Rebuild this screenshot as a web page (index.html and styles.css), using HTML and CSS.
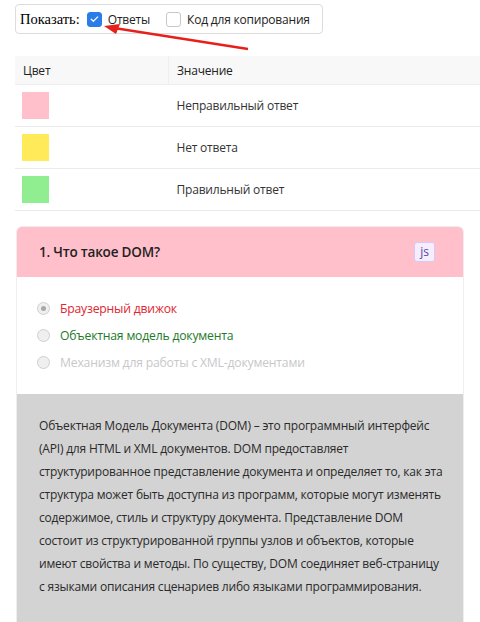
FILE: index.html
```html
<!DOCTYPE html>
<html lang="ru">
<head>
<meta charset="utf-8">
<link rel="stylesheet" href="styles.css">
</head>
<body>
<div class="page">
  <div class="toolbar">
    <span class="show-label">Показать:</span>
    <label class="opt"><span class="cb cb-on"><svg viewBox="0 0 16 16" width="14" height="14"><path d="M4 8.3l2.6 2.5L12 5.4" fill="none" stroke="#fff" stroke-width="1.5" stroke-linecap="round" stroke-linejoin="round"/></svg></span>Ответы</label>
    <label class="opt"><span class="cb"></span>Код для копирования</label>
  </div>
  <svg class="arrow" width="160" height="40" viewBox="0 0 160 40"><path d="M148 24 L14 3" stroke="#e8201c" stroke-width="2.5" fill="none"/><path d="M4 1 L20 -1 L16 9 Z" fill="#e8201c"/></svg>

  <table class="legend">
    <thead><tr><th class="c1">Цвет</th><th>Значение</th></tr></thead>
    <tbody>
      <tr><td class="c1"><span class="sw sw-pink"></span></td><td>Неправильный ответ</td></tr>
      <tr><td class="c1"><span class="sw sw-yellow"></span></td><td>Нет ответа</td></tr>
      <tr><td class="c1"><span class="sw sw-green"></span></td><td>Правильный ответ</td></tr>
    </tbody>
  </table>

  <div class="card">
    <div class="card-head">
      <span class="q-title">1. Что такое DOM?</span>
      <span class="tag">js</span>
    </div>
    <div class="card-body">
      <div class="ans wrong"><span class="radio radio-sel"></span>Браузерный движок</div>
      <div class="ans right"><span class="radio"></span>Объектная модель документа</div>
      <div class="ans dim"><span class="radio"></span>Механизм для работы с XML-документами</div>
    </div>
    <div class="explain">Объектная Модель Документа (DOM) – это программный интерфейс (API) для HTML и XML документов. DOM предоставляет структурированное представление документа и определяет то, как эта структура может быть доступна из программ, которые могут изменять содержимое, стиль и структуру документа. Представление DOM состоит из структурированной группы узлов и объектов, которые имеют свойства и методы. По существу, DOM соединяет веб-страницу с языками описания сценариев либо языками программирования.</div>
  </div>
</div>
</body>
</html>
```
FILE: styles.css
```css
html, body { margin: 0; padding: 0; background: #fff; }
body { font-family: "Open Sans", "Noto Sans", sans-serif; font-size: 12px; letter-spacing: -0.2px; color: #212529; }
.page { position: relative; padding: 4px 0 0 15px; }
.toolbar {
  display: inline-flex; align-items: center; height: 28px;
  border: 1px solid #dcdcdc; border-radius: 4px; padding: 0 12px 0 4px;
}
.show-label { font-family: "Liberation Serif", serif; font-size: 14.5px; letter-spacing: 0; color: #000; margin-right: 7px; }
.opt { display: inline-flex; align-items: center; color: #222; font-size: 12px; margin-right: 16px; }
.opt:last-child { margin-right: 0; }
.cb { width: 13px; height: 13px; border: 1px solid #c8c8c8; border-radius: 3px; margin-right: 6px; display: inline-flex; align-items: center; justify-content: center; background: #fff; }
.cb-on { background: #2a7de8; border-color: #2a7de8; }
.arrow { position: absolute; left: 100px; top: 25px; overflow: visible; }

.legend { border-collapse: collapse; width: 465px; margin-top: 22px; }
.legend th { background: #f8f8f8; text-align: left; font-weight: 400; height: 28px; padding: 0 8px; border-bottom: 1px solid #eee; color: #222; }
.legend th.c1 { border-right: 1px solid #eee; width: 137px; }
.legend td { height: 41px; padding: 0 8px; border-bottom: 1px solid #eaeaea; color: #333; }
.legend td.c1 { padding-left: 7px; }
.sw { display: block; width: 27px; height: 27px; }
.sw-pink { background: #ffc0cb; }
.sw-yellow { background: #ffeb5a; }
.sw-green { background: #90ee90; }

.card { box-sizing: border-box; width: 448px; margin-top: 15px; margin-left: 1px; border-radius: 6px 6px 0 0; overflow: hidden; border: 1px solid #eee; border-bottom: 0; }
.card-head { background: #ffc0cb; height: 50px; display: flex; align-items: center; justify-content: space-between; padding: 0 28px 0 22px; }
.q-title { font-weight: 600; font-size: 13.5px; color: #222; }
.tag { font-size: 12px; color: #5b3fa8; background: #f4eefe; border: 1px solid #d8c8f5; border-radius: 3px; padding: 0 5px; line-height: 18px; letter-spacing: 0; }
.card-body { background: #fff; padding: 18px 20px; }
.ans { display: flex; align-items: center; height: 27px; font-size: 12.2px; }
.radio { width: 11px; height: 11px; border: 1px solid #cfcfcf; border-radius: 50%; background: #efefef; margin-right: 10px; position: relative; }
.radio-sel::after { content: ""; position: absolute; left: 3px; top: 3px; width: 5px; height: 5px; border-radius: 50%; background: #a8a8a8; }
.wrong { color: #e0262f; }
.right { color: #1e7a2a; }
.dim { color: #c8c8c8; }
.explain { background: #d3d3d3; padding: 20px 16px 24px 22px; line-height: 23px; font-size: 12px; color: #2a2a2a; }
```
